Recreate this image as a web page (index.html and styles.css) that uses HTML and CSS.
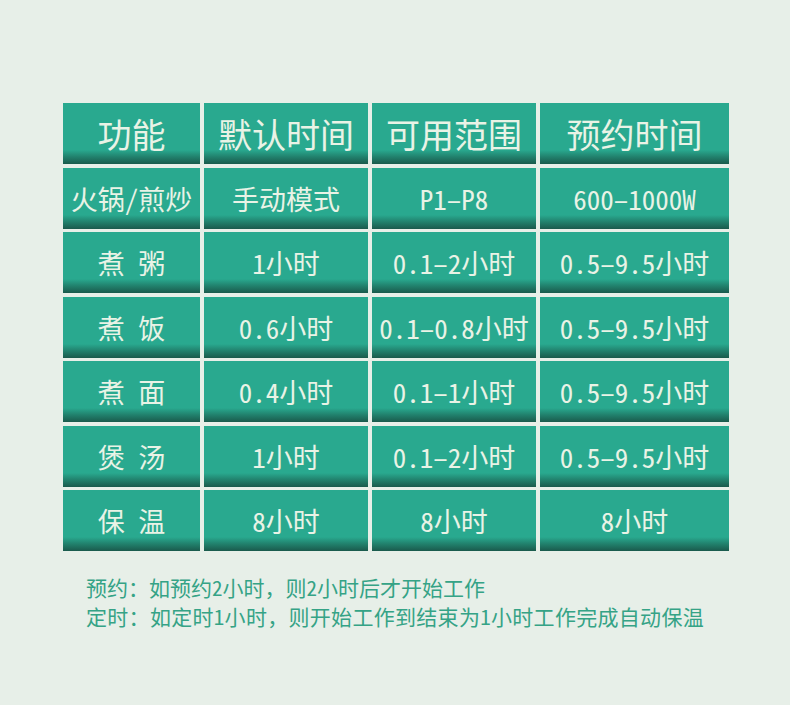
FILE: index.html
```html
<!DOCTYPE html>
<html lang="zh-CN">
<head>
<meta charset="utf-8">
<title>功能时间表</title>
<link rel="stylesheet" href="styles.css">
</head>
<body>
<div class="page">
  <div class="table">
    <div class="cell head">功能</div>
    <div class="cell head">默认时间</div>
    <div class="cell head">可用范围</div>
    <div class="cell head">预约时间</div>

    <div class="cell">火锅/煎炒</div>
    <div class="cell">手动模式</div>
    <div class="cell">P1–P8</div>
    <div class="cell">600–1000W</div>

    <div class="cell">煮 粥</div>
    <div class="cell">1小时</div>
    <div class="cell">0.1–2小时</div>
    <div class="cell">0.5–9.5小时</div>

    <div class="cell">煮 饭</div>
    <div class="cell">0.6小时</div>
    <div class="cell">0.1–0.8小时</div>
    <div class="cell">0.5–9.5小时</div>

    <div class="cell">煮 面</div>
    <div class="cell">0.4小时</div>
    <div class="cell">0.1–1小时</div>
    <div class="cell">0.5–9.5小时</div>

    <div class="cell">煲 汤</div>
    <div class="cell">1小时</div>
    <div class="cell">0.1–2小时</div>
    <div class="cell">0.5–9.5小时</div>

    <div class="cell">保 温</div>
    <div class="cell">8小时</div>
    <div class="cell">8小时</div>
    <div class="cell">8小时</div>
  </div>
  <div class="notes">
    <p>预约：如预约2小时，则2小时后才开始工作</p>
    <p class="wide">定时：如定时1小时，则开始工作到结束为1小时工作完成自动保温</p>
  </div>
</div>
</body>
</html>
```
FILE: styles.css
```css
html, body {
  margin: 0;
  padding: 0;
  background: #e7efe8;
}
body {
  width: 790px;
  height: 705px;
  overflow: hidden;
  font-family: "Noto Sans Mono CJK SC", "Noto Sans CJK SC", sans-serif;
}
.page {
  padding: 103px 0 0 63px;
}
.table {
  display: grid;
  grid-template-columns: 137px 164px 164px 189px;
  grid-auto-rows: 61px;
  column-gap: 4px;
  row-gap: 3.5px;
}
.cell {
  display: flex;
  align-items: center;
  justify-content: center;
  color: #e9f3e6;
  font-size: 27px;
  white-space: pre;
  background: linear-gradient(to bottom,
    #29a98f 0,
    #29a98f calc(100% - 14px),
    #21806c calc(100% - 7px),
    #1a5a4c 100%);
}
.cell.head {
  font-size: 34px;
  padding-bottom: 1px;
}
.notes {
  margin: 22px 0 0 23px;
  color: #35a386;
  font-size: 21px;
  line-height: 29px;
}
.notes p {
  margin: 0;
  white-space: nowrap;
}
.notes .wide {
  letter-spacing: 0.3px;
}
```
